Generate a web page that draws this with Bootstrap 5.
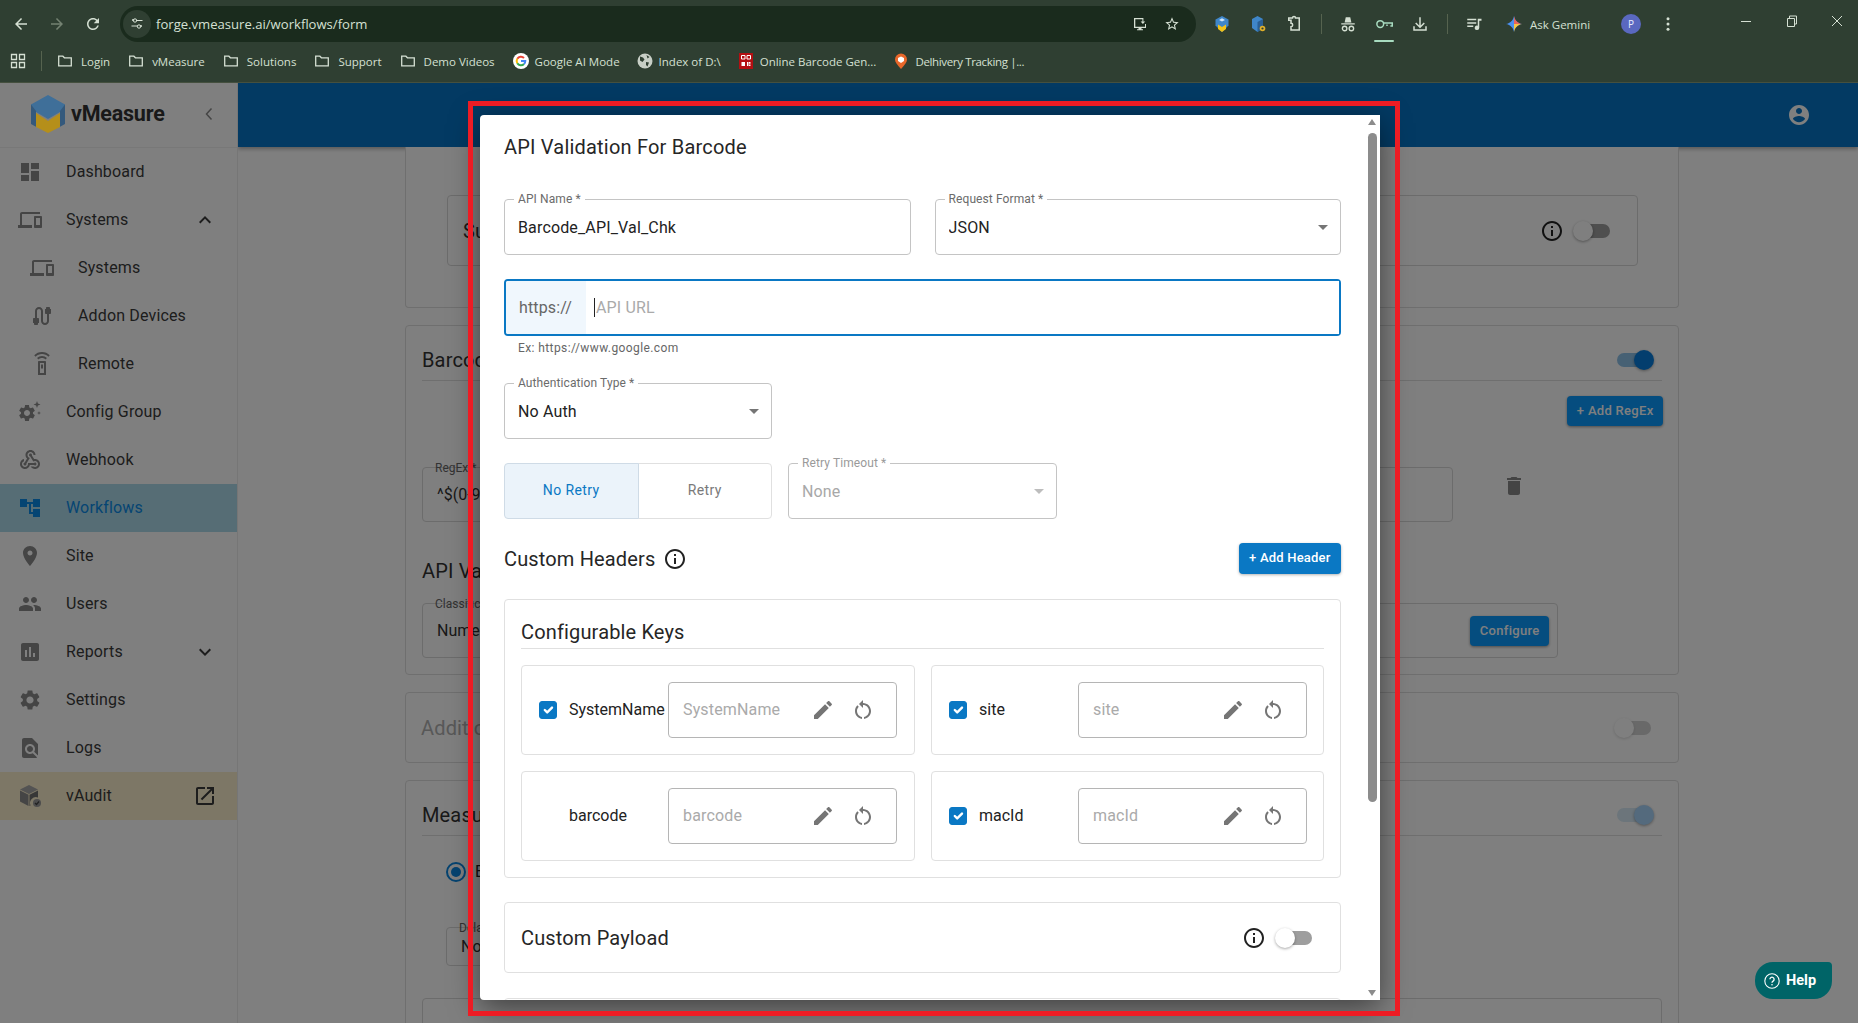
<!DOCTYPE html>
<html lang="en">
<head>
    <meta charset="UTF-8">
    <meta name="viewport" content="width=device-width, initial-scale=1, shrink-to-fit=no">
    <title>vMeasure - Workflow form</title>
    <link href="https://cdn.jsdelivr.net/npm/bootstrap@5.3.0/dist/css/bootstrap.min.css" rel="stylesheet">
    <style>
        :root {
            --primary-color: #0a78c4;
            --chrome-bg: #2f3f32;
            --chrome-text: #d5e0d3;
        }

        html, body { height: 100%; }

        body {
            overflow: hidden;
            font-family: Roboto, "Liberation Sans", sans-serif;
            background: #fff;
            color: #212121;
        }

        /* browser chrome */
        .chrome { height: 83px; background: var(--chrome-bg); border-bottom: 1px solid #45503f; color: var(--chrome-text); }
        .tool-row { height: 42px; padding: 6px 0 0 3px; }
        .tb-slot { width: 36px; height: 36px; flex: none; }
        .tb-slot svg { width: 18px; height: 18px; fill: currentColor; }
        .tb-dim { color: #748272; }
        .addr { flex: none; width: 1076px; height: 36px; margin-left: 9px; background: #1a2b1d; border-radius: 18px; padding-left: 3px; padding-right: 8px; font: 13.1px "Open Sans", sans-serif; }
        .addr-tune { width: 28px; height: 28px; margin-right: 5px; border-radius: 50%; background: #2f3f32; }
        .addr-tune svg, .addr-end svg { width: 16px; height: 16px; fill: currentColor; }
        .addr-end { width: 32px; }
        .tool-right { margin-left: 8px; flex: none; }
        .tb-sep { width: 1px; height: 20px; margin: 0 8.5px; background: #56634f; }
        .key-under { width: 20px; height: 2px; background: #a8dcc0; }
        .gem-text { margin-left: 8px; font: 11.5px "Open Sans", sans-serif; white-space: nowrap; }
        .gem-icon { margin-left: 14px; width: 16px; height: 16px; }
        .avatar { margin-left: 31px; width: 20px; height: 20px; flex: none; border-radius: 50%; background: #5a68c0; color: #e8ecff; font: 10px/20px "Open Sans", sans-serif; text-align: center; }
        .kebab { margin-left: 9px; }
        .win-btn { width: 46px; height: 36px; flex: none; margin-top: -6px; }
        .win-btn svg { width: 14px; height: 14px; }
        .win-first { margin-left: 37px; }
        .win-last { width: 36px; margin-left: 4px; }

        .mark-row { height: 38px; padding-left: 10px; font: 11.5px "Open Sans", sans-serif; }
        .mark-row svg { width: 16px; height: 16px; flex: none; }
        .mark-sep { width: 1px; height: 20px; margin: 0 15px; background: #56634f; }
        .mark-item { margin-right: 18px; gap: 8px; white-space: nowrap; }
        .mark-fav { margin-right: 17px; gap: 6px; }
        .mark-tight { letter-spacing: -.35px; }
        .folder-ico { fill: none; stroke: currentColor; stroke-width: 1.3; }

        /* app behind the dialog */
        .app-wrap { height: 940px; position: relative; }
        .side { width: 238px; flex: none; background: #fff; border-right: 1px solid #ececec; }
        .side-logo { height: 65px; border-bottom: 1px solid #f0f0f0; padding: 0 20px 2px 31px; }
        .side-logo svg.cube { width: 34px; height: 38px; margin-right: 6px; position: relative; z-index: 1; }
        .logo-text { font-weight: 700; font-size: 21.5px; letter-spacing: -.2px; color: #333; }
        .side-link { height: 48px; padding: 0 20px 0 18px; color: #3b3b3b; font-size: 16px; letter-spacing: .15px; }
        .side-link:hover { color: #3b3b3b; }
        .side-ico { width: 24px; height: 24px; margin-right: 24px; fill: #8a8a8a; flex: none; }
        .side-sub { padding-left: 30px; }
        .side-end { width: 24px; height: 24px; fill: #3b3b3b; }
        .side-on { background: #acdaea; color: #0a8ae6; }
        .side-on:hover { color: #0a8ae6; }
        .side-on .side-ico { fill: #0a8ae6; }
        .side-audit { background: #faeecc; }
        .top-bar { height: 64px; flex: none; background: #0674c6; box-shadow: 0 2px 4px rgba(0, 0, 0, .3); padding-right: 47px; position: relative; }
        .top-bar svg { width: 24px; height: 24px; fill: #fff; }
        .page { overflow: hidden; padding: 0 179px 0 167px; gap: 17px; }
        .pg-card { flex: none; background: #fff; border: 1px solid #dedede; border-radius: 4px; padding: 0 16px; --bs-card-bg: #fff; }
        .pg-first { height: 161px; border-top: 0; border-radius: 0 0 4px 4px; padding: 48px 40px 0 41px; }
        .pg-title { font-size: 20px; letter-spacing: .15px; color: #333; }
        .pg-head { height: 55px; border-bottom: 1px solid #dedede; padding: 14px 8px 0 0; }
        .pg-box { border: 1px solid #d8d8d8; border-radius: 4px; }
        .sub-box { height: 71px; padding: 0 27px 0 15px; }
        .sub-box .info-ico { margin-right: 9px; }
        .rx-add { margin-top: 15px; margin-right: -1px; }
        .pg-btn { height: 30px; padding: 0 9.5px; font-size: 13px; font-weight: 500; letter-spacing: .3px; background: #0b9bff; border: 0; color: #fff; border-radius: 4px; box-shadow: 0 1px 3px rgba(0, 0, 0, .4); }
        .rx-row { margin-top: 41px; }
        .out-fld { height: 55px; position: relative; padding: 0 14px; font-size: 16px; color: #333; }
        .out-tag { position: absolute; left: 12px; top: -7px; font-size: 12px; line-height: 14px; color: #666; }
        .rx-box { width: 1031px; }
        .rx-trash { width: 24px; height: 24px; margin-left: 49px; margin-top: -18px; fill: #888; }
        .api-title { margin-top: 37px; line-height: 24px; }
        .api-box { width: 1136px; margin-top: 20px; padding-right: 8px; margin-bottom: 16px; }
        .sw-off, .sw-on { width: 37px; height: 20px; flex: none; position: relative; display: block; }
        .sw-off::before, .sw-on::before { content: ""; position: absolute; top: 3px; height: 14px; left: 3px; right: 0; border-radius: 7px; background: #9e9e9e; }
        .sw-off::after, .sw-on::after { content: ""; position: absolute; top: 0; width: 20px; height: 20px; border-radius: 50%; background: #fff; box-shadow: 0 1px 3px rgba(0, 0, 0, .35); }
        .sw-off::after { left: 0; }
        .sw-on::after { right: 0; background: #067ddc; }
        .sw-on::before { right: 3px; left: 0; background: #8fc2e8; }
        .sw-mute::after { background: #a8d4fa; }
        .sw-mute::before { background: #d8eaf6; }
        .sw-pale { opacity: .45; }
        .info-ico { width: 24px; height: 24px; fill: #222; flex: none; margin-right: 7px; }
        .dim-title { color: #b0b0b0; }
        .radio-row { height: 24px; margin: 24px 0 0 24px; gap: 9px; }
        .radio-dot { width: 20px; height: 20px; border-radius: 50%; border: 2px solid #0a86e0; position: relative; }
        .radio-dot::after { content: ""; position: absolute; inset: 3px; border-radius: 50%; background: #0a86e0; }
        .delay-box { height: 39px; margin: 43px 0 0 24px; width: 600px; }
        .low-box { height: 120px; margin-top: 32px; }

        /* dim layer and dialog */
        .dim-layer { position: absolute; inset: 0; background: rgba(0, 0, 0, .5); }
        .dlg { position: absolute; left: 480px; top: 32px; width: 900px; height: 885px; overflow: hidden; background: #fff; border-radius: 4px 0 0 4px; padding: 20px 39px 0 24px; box-shadow: 0 8px 30px rgba(0, 0, 0, .5); }
        .dlg-title { font-size: 20px; line-height: 24px; font-weight: 400; letter-spacing: .2px; margin: 0 0 40px; color: #262626; }
        .fld { position: relative; }
        .fld-tag { position: absolute; z-index: 2; left: 10px; top: -7px; padding: 0 4px; background: #fff; font-size: 12px; line-height: 14px; letter-spacing: .1px; color: #6b6b6b; }
        .fld .form-control, .fld .form-select { height: 56px; padding: 0 13px; font-size: 16px; letter-spacing: .15px; color: #222; border: 1px solid #c4c4c4; border-radius: 4px; box-shadow: none; }
        .fld .form-select { padding-top: 1px; background-size: 10px 5px; background-position: right 12px center; background-image: url("data:image/svg+xml,%3csvg xmlns='http://www.w3.org/2000/svg' viewBox='0 0 10 5'%3e%3cpath fill='%23757575' d='M0 0h10L5 5z'/%3e%3c/svg%3e"); }
        .fld .form-select:disabled { background-color: #fff; color: #a8a8a8; background-image: url("data:image/svg+xml,%3csvg xmlns='http://www.w3.org/2000/svg' viewBox='0 0 10 5'%3e%3cpath fill='%23bdbdbd' d='M0 0h10L5 5z'/%3e%3c/svg%3e"); }
        .fld-off .fld-tag { color: #9a9a9a; }
        .url-group { height: 57px; margin-top: 24px; border: 2px solid var(--primary-color); border-radius: 4px; position: relative; }
        .url-group .input-group-text { width: 81px; padding: 0 0 0 13px; background: #f0f7fd; border: 0; border-right: 1px solid #5bb8ee; border-radius: 2px 0 0 2px; font-size: 16px; color: #666; letter-spacing: .15px; }
        .url-group .form-control { border: 0; box-shadow: none; padding: 0 10px; font-size: 16px; letter-spacing: .15px; }
        .url-group .form-control::placeholder, .key-input input::placeholder { color: #aaa; opacity: 1; }
        .url-caret { position: absolute; z-index: 6; left: 89px; top: 17px; width: 1px; height: 19px; background: #222; }
        .url-hint { margin: 3px 0 0 14px; font-size: 12px; line-height: 18px; letter-spacing: .4px; color: #666; }
        .w-auth { width: 268px; margin-top: 26px; }
        .retry-row { margin-top: 24px; gap: 16px; }
        .retry-btns { width: 268px; height: 56px; }
        .retry-btns .btn { flex: 1 1 0; font-size: 14px; font-weight: 400; letter-spacing: .4px; padding-bottom: 8px; background: #fff; border: 1px solid #e0e0e0; color: #7a7a7a; border-radius: 4px; }
        .retry-btns .btn.active { background: #ebf3fa; color: var(--primary-color); border-color: #cfdbe6; }
        .w-timeout { width: 269px; }
        .hdr-row { margin-top: 24px; height: 31px; }
        .hdr-title { font-size: 20px; letter-spacing: .15px; color: #262626; }
        .hdr-row .info-ico { margin: 0 0 0 8px; }
        .add-btn { height: 31px; padding: 0 10.5px 2px; font-size: 13px; font-weight: 500; letter-spacing: .2px; background: var(--primary-color); border: 0; border-radius: 4px; box-shadow: 0 1px 3px rgba(0, 0, 0, .3); }
        .key-panel { margin-top: 25px; height: 279px; padding: 20px 16px 0; border: 1px solid #e0e0e0; border-radius: 4px; }
        .key-title { font-size: 20px; line-height: 24px; letter-spacing: .15px; padding-bottom: 4px; border-bottom: 1px solid #e0e0e0; margin-bottom: 16px; color: #262626; height: 29px; }
        .key-grid { display: grid; grid-template-columns: 394px 393px; gap: 16px; }
        .key-card { height: 90px; border: 1px solid #e0e0e0; border-radius: 4px; padding: 0 17px; }
        .key-card:nth-child(even) { padding-right: 16px; }
        .key-card .form-check-input { width: 18px; height: 18px; margin: 0 12px 0 0; flex: none; background-color: var(--primary-color); border-color: var(--primary-color); border-radius: 3px; }
        .key-name { flex: 1; font-size: 16px; color: #222; white-space: nowrap; }
        .key-input { width: 229px; height: 56px; flex: none; border: 1px solid #b5b5b5; border-radius: 4px; padding: 0 21px 0 14px; gap: 16px; }
        .key-input input { flex: 1; min-width: 0; border: 0; outline: 0; padding: 0; font-size: 16px; letter-spacing: .15px; }
        .key-input svg { width: 24px; height: 24px; fill: #757575; flex: none; }
        .payload-box { margin-top: 24px; height: 71px; padding: 0 28px 0 16px; border: 1px solid #e0e0e0; border-radius: 4px; }
        .payload-box .info-ico { margin-right: 9px; }
        .next-box { margin-top: 25px; height: 40px; border: 1px solid #e0e0e0; border-radius: 4px; }

        /* fake scroll bar of the dialog */
        .scroll-track { position: absolute; top: 0; right: 0; bottom: 0; width: 12px; background: #fff; }
        .scroll-thumb { position: absolute; left: 0; top: 18px; width: 9px; height: 669px; border-radius: 5px; background: #8c8c8c; }
        .scroll-up, .scroll-down { position: absolute; left: 0; width: 0; height: 0; border-left: 4.5px solid transparent; border-right: 4.5px solid transparent; }
        .scroll-up { top: 4px; border-bottom: 6px solid #8c8c8c; }
        .scroll-down { bottom: 4px; border-top: 6px solid #8c8c8c; }

        .help-pill { position: absolute; z-index: 5; left: 1755px; top: 879px; width: 77px; height: 37px; background: #006467; color: #fff; border-radius: 18px 4px 18px 18px; font-size: 14.5px; font-weight: 700; gap: 6px; padding-left: 9px; }
        .help-pill svg { width: 16px; height: 16px; flex: none; }
        .red-frame { position: absolute; z-index: 10; left: 468px; top: 18px; width: 932px; height: 915px; border: 5px solid #ed1c24; pointer-events: none; }
    </style>
</head>
<body>
    <svg width="0" height="0" class="position-absolute">
        <symbol id="i-devices" viewBox="0 0 24 24"><path d="M4 6h18V4H4c-1.1 0-2 .9-2 2v11H0v3h14v-3H4V6zm19 2h-6c-.55 0-1 .45-1 1v10c0 .55.45 1 1 1h6c.55 0 1-.45 1-1V9c0-.55-.45-1-1-1zm-1 9h-4v-7h4v7z"/></symbol>
        <symbol id="i-gear" viewBox="0 0 24 24"><path d="M19.14 12.94c.04-.3.06-.61.06-.94 0-.32-.02-.64-.07-.94l2.03-1.58c.18-.14.23-.41.12-.61l-1.92-3.32c-.12-.22-.37-.29-.59-.22l-2.39.96c-.5-.38-1.03-.7-1.62-.94l-.36-2.54c-.04-.24-.24-.41-.48-.41h-3.84c-.24 0-.43.17-.47.41l-.36 2.54c-.59.24-1.13.57-1.62.94l-2.39-.96c-.22-.08-.47 0-.59.22L2.74 8.87c-.12.21-.08.47.12.61l2.03 1.58c-.05.3-.09.63-.09.94s.02.64.07.94l-2.03 1.58c-.18.14-.23.41-.12.61l1.92 3.32c.12.22.37.29.59.22l2.39-.96c.5.38 1.03.7 1.62.94l.36 2.54c.05.24.24.41.48.41h3.84c.24 0 .44-.17.47-.41l.36-2.54c.59-.24 1.13-.56 1.62-.94l2.39.96c.22.08.47 0 .59-.22l1.92-3.32c.12-.22.07-.47-.12-.61l-2.01-1.58zM12 15.6c-1.98 0-3.6-1.62-3.6-3.6s1.62-3.6 3.6-3.6 3.6 1.62 3.6 3.6-1.62 3.6-3.6 3.6z"/></symbol>
        <symbol id="i-info" viewBox="0 0 24 24"><path d="M11 7h2v2h-2zm0 4h2v6h-2zm1-9C6.48 2 2 6.48 2 12s4.48 10 10 10 10-4.48 10-10S17.52 2 12 2zm0 18c-4.41 0-8-3.59-8-8s3.59-8 8-8 8 3.59 8 8-3.59 8-8 8z"/></symbol>
        <symbol id="i-edit" viewBox="0 0 24 24"><path d="M3 17.25V21h3.75L17.81 9.94l-3.75-3.75L3 17.25zM20.71 7.04c.39-.39.39-1.02 0-1.41l-2.34-2.34c-.39-.39-1.02-.39-1.41 0l-1.83 1.83 3.75 3.75 1.83-1.83z"/></symbol>
        <symbol id="i-reset" viewBox="0 0 24 24"><path d="M12 5V2L8 6l4 4V7c3.31 0 6 2.69 6 6 0 2.97-2.17 5.43-5 5.91v2.02c3.95-.49 7-3.85 7-7.93 0-4.42-3.58-8-8-8zm-6 8c0-1.65.67-3.15 1.76-4.24L6.34 7.34C4.9 8.79 4 10.79 4 13c0 4.08 3.05 7.44 7 7.93v-2.02C8.17 18.43 6 15.97 6 13z"/></symbol>
        <symbol id="i-folder" viewBox="0 0 16 16"><path d="M1.7 3.2h4.2l1.5 1.6h6.9v8H1.7z"/></symbol>
    </svg>

    <!-- browser toolbar and bookmarks -->
    <div class="chrome">
        <div class="tool-row d-flex align-items-center">
            <div class="tb-slot d-flex align-items-center justify-content-center"><svg viewBox="0 0 24 24"><path d="M20 11H7.83l5.59-5.59L12 4l-8 8 8 8 1.41-1.41L7.83 13H20v-2z"/></svg></div>
            <div class="tb-slot tb-dim d-flex align-items-center justify-content-center"><svg viewBox="0 0 24 24"><path d="M4 11h12.17l-5.59-5.59L12 4l8 8-8 8-1.41-1.41L16.17 13H4v-2z"/></svg></div>
            <div class="tb-slot d-flex align-items-center justify-content-center"><svg viewBox="0 0 24 24"><path d="M17.65 6.35C16.2 4.9 14.21 4 12 4c-4.42 0-7.99 3.58-7.99 8s3.57 8 7.99 8c3.73 0 6.84-2.55 7.73-6h-2.08c-.82 2.33-3.04 4-5.65 4-3.31 0-6-2.69-6-6s2.69-6 6-6c1.66 0 3.14.69 4.22 1.78L13 11h7V4l-2.35 2.35z"/></svg></div>
            <div class="addr d-flex align-items-center">
                <div class="addr-tune d-flex align-items-center justify-content-center"><svg viewBox="0 0 16 16"><path d="M3 3.2h2.2v1.6H3zM7 4h6.5v1H7zM10.8 9.2H13v1.6h-2.2zM2.5 9.5H9v1H2.5z"/><circle cx="6" cy="4.5" r="1.7" fill="none" stroke="currentColor"/><circle cx="10" cy="10.5" r="1.7" fill="none" stroke="currentColor"/></svg></div>
                <span class="flex-grow-1">forge.vmeasure.ai/workflows/form</span>
                <div class="addr-end d-flex align-items-center justify-content-center"><svg viewBox="0 0 16 16"><path d="M2 2h9v1.3H3.3v7.4H13V8h1v4H9.5v1.2h1.5v1H5v-1h1.5V12H2zM11.4 2v3.4h1.8l-2.3 2.7-2.3-2.7h1.8V2z"/></svg></div>
                <div class="addr-end d-flex align-items-center justify-content-center"><svg viewBox="0 0 24 24"><path d="M22 9.24l-7.19-.62L12 2 9.19 8.63 2 9.24l5.46 4.73L5.82 21 12 17.27 18.18 21l-1.63-7.03L22 9.24zM12 15.4l-3.76 2.27 1-4.28-3.32-2.88 4.38-.38L12 6.1l1.71 4.04 4.38.38-3.32 2.88 1 4.28L12 15.4z"/></svg></div>
            </div>
            <div class="tool-right d-flex align-items-center">
                <div class="tb-slot d-flex align-items-center justify-content-center"><svg viewBox="0 0 18 18"><path fill="#3f86c9" d="M9 1l6.5 3.6v6L9 17l-6.5-6.4v-6z"/><path fill="#f2c318" d="M5 9.5l4 2.5 4-2.5V14l-4 3-4-3z"/><path fill="#cfe6fa" d="M9 3.2l3 1.7-3 1.7-3-1.7z"/></svg></div>
                <div class="tb-slot d-flex align-items-center justify-content-center"><svg viewBox="0 0 18 18"><path fill="#3f86c9" d="M3 4l5.5-3L14 4v9l-5.5 4L3 13z"/><path fill="#2a5f94" d="M8.5 7L14 4v9l-5.5 4z"/><circle cx="13.5" cy="13.5" r="2.8" fill="#e0b02a"/><circle cx="13.5" cy="13.5" r="1.1" fill="#2f3f32"/></svg></div>
                <div class="tb-slot d-flex align-items-center justify-content-center"><svg viewBox="0 0 24 24"><path fill="none" stroke="currentColor" stroke-width="2" d="M5 4h5a2 2 0 0 1 4 0h5v16H8v-4.5a2.2 2.2 0 0 0 0-4.5V7H5z"/></svg></div>
                <div class="tb-sep"></div>
                <div class="tb-slot d-flex align-items-center justify-content-center"><svg viewBox="0 0 24 24"><path d="M9 3h6l1.5 7h-9zM3 11h18v1.500H3z"/><circle cx="7.500" cy="18" r="3" fill="none" stroke="currentColor" stroke-width="1.800"/><circle cx="16.500" cy="18" r="3" fill="none" stroke="currentColor" stroke-width="1.800"/></svg></div>
                <div class="tb-slot d-flex align-items-center justify-content-center position-relative"><svg viewBox="0 0 24 24"><circle cx="7" cy="12" r="4.500" fill="none" stroke="#a8dcc0" stroke-width="2"/><path fill="none" stroke="#a8dcc0" stroke-width="2" d="M11.500 10.500H23v4h-2.500M16 14.500v-2"/></svg><span class="position-absolute bottom-0 rounded-pill key-under"></span></div>
                <div class="tb-slot d-flex align-items-center justify-content-center"><svg viewBox="0 0 24 24"><path d="M11 3h2v11l4-4 1.400 1.400L12 17.800l-6.400-6.400L7 10l4 4zM3 15h2v4h14v-4h2v6H3z"/></svg></div>
                <div class="tb-sep"></div>
                <div class="tb-slot d-flex align-items-center justify-content-center"><svg viewBox="0 0 24 24"><path d="M3 5h12v2H3zM3 9.500h12v2H3zM3 14h8v2H3zM17 5h5v2.500h-3V17a3 3 0 1 1-2-2.800z"/></svg></div>
                <svg class="gem-icon" viewBox="0 0 16 16"><path fill="#4a90f0" d="M8 0c.7 4.300 3.700 7.300 8 8-4.300.7-7.300 3.700-8 8-.7-4.300-3.700-7.300-8-8 4.300-.7 7.300-3.700 8-8z"/><path fill="#e8645a" d="M8 0c.7 4.300 3.700 7.300 8 8H8z"/><path fill="#f5c542" d="M16 8c-4.300.7-7.300 3.700-8 8V8z"/></svg>
                <span class="gem-text">Ask Gemini</span>
                <div class="avatar">P</div>
                <div class="tb-slot kebab d-flex align-items-center justify-content-center"><svg viewBox="0 0 24 24"><circle cx="12" cy="5" r="2"/><circle cx="12" cy="12" r="2"/><circle cx="12" cy="19" r="2"/></svg></div>
                <div class="win-btn win-first d-flex align-items-center justify-content-center"><svg viewBox="0 0 14 14"><path stroke="currentColor" d="M2 7.500h10"/></svg></div>
                <div class="win-btn d-flex align-items-center justify-content-center"><svg viewBox="0 0 14 14"><path fill="none" stroke="currentColor" d="M2.500 4.500h7v8h-7zM4.500 4.500v-2.500h7v8h-2"/></svg></div>
                <div class="win-btn win-last d-flex align-items-center justify-content-center"><svg viewBox="0 0 14 14"><path stroke="currentColor" d="M2 2l10 10M12 2L2 12"/></svg></div>
            </div>
        </div>
        <div class="mark-row d-flex align-items-center">
            <svg viewBox="0 0 16 16" class="apps-ico"><path fill="none" stroke="currentColor" stroke-width="1.300" d="M1.500 1.500h5v5h-5zM9.500 1.500h5v5h-5zM1.500 9.500h5v5h-5zM9.500 9.500h5v5h-5z"/></svg>
            <div class="mark-sep"></div>
            <div class="mark-item d-flex align-items-center"><svg class="folder-ico"><use href="#i-folder"/></svg><span>Login</span></div>
            <div class="mark-item d-flex align-items-center"><svg class="folder-ico"><use href="#i-folder"/></svg><span>vMeasure</span></div>
            <div class="mark-item d-flex align-items-center"><svg class="folder-ico"><use href="#i-folder"/></svg><span>Solutions</span></div>
            <div class="mark-item d-flex align-items-center"><svg class="folder-ico"><use href="#i-folder"/></svg><span>Support</span></div>
            <div class="mark-item d-flex align-items-center"><svg class="folder-ico"><use href="#i-folder"/></svg><span>Demo Videos</span></div>
            <div class="mark-item mark-fav d-flex align-items-center"><svg viewBox="0 0 16 16"><circle cx="8" cy="8" r="8" fill="#fff"/><path fill="none" stroke="#ea4335" stroke-width="2" d="M4.300 5.800A4.300 4.300 0 0 1 11 5"/><path fill="none" stroke="#fbbc05" stroke-width="2" d="M4.300 5.800a4.300 4.300 0 0 0 0 4.400"/><path fill="none" stroke="#34a853" stroke-width="2" d="M4.300 10.200A4.300 4.300 0 0 0 11 11"/><path fill="none" stroke="#4285f4" stroke-width="2" d="M11 11c.8-.8 1.300-1.800 1.300-3H8"/></svg><span>Google AI Mode</span></div>
            <div class="mark-item mark-fav d-flex align-items-center"><svg viewBox="0 0 16 16"><circle cx="8" cy="8" r="7.500" fill="#c8cfc6"/><path fill="#2f3f32" d="M3 3.500l3 1 1.500 2-2 2.500-2.500-1.500zM9 9l3 .5-1.500 4-1.500-1.500zM9.500 2l3 2-2 1.500z"/></svg><span>Index of D:\</span></div>
            <div class="mark-item mark-fav d-flex align-items-center"><svg viewBox="0 0 16 16"><path fill="#b30f12" d="M1 0h14v16H1z"/><path fill="none" stroke="#fff" d="M3.500 2.500h3.500v3.500H3.500zM9 2.500h3.500v3.500H9z"/><path fill="#fff" d="M3.500 9h3.500v4H3.500zM9 9h1.500v4H9zM11 9h1.500v1.800H11zM11 11.500h1.500V13H11z"/></svg><span>Online Barcode Gen...</span></div>
            <div class="mark-item mark-fav d-flex align-items-center"><svg viewBox="0 0 16 16"><path fill="#e8672a" d="M8 16C4 11.800 2 9 2 6.500a6 6 0 0 1 12 0C14 9 12 11.800 8 16z"/><path fill="#fff" d="M5 5l3-1.500L11 5v3L8 10 5 8z"/></svg><span class="mark-tight">Delhivery Tracking |...</span></div>
        </div>
    </div>

    <div class="app-wrap d-flex">
        <!-- sidebar -->
        <aside class="side">
            <div class="side-logo d-flex align-items-center">
                <svg class="cube" viewBox="0 0 34 38"><path fill="#3f6f99" d="M17 0l17 9.500V14L17 24 0 14V9.500z"/><path fill="#34597c" d="M0 9.500V29l5 2.800V16z"/><path fill="#34597c" d="M34 9.500V29l-5 2.800V16z"/><path fill="#b58f1a" d="M5 18l12 8 12-8v14l-12 6-12-6z"/></svg>
                <span class="logo-text flex-grow-1">vMeasure</span>
                <svg width="16" height="16" viewBox="0 0 16 16"><path fill="none" stroke="#8a8a8a" stroke-width="1.500" d="M10.500 2.500L5.500 8l5 5.500"/></svg>
            </div>
            <nav class="nav flex-column">
                <a class="nav-link side-link d-flex align-items-center" href="#"><svg class="side-ico" viewBox="0 0 24 24"><path d="M3 13h8V3H3v10zm0 8h8v-6H3v6zm10 0h8V11h-8v10zm0-18v6h8V3h-8z"/></svg>Dashboard</a>
                <a class="nav-link side-link d-flex align-items-center" href="#"><svg class="side-ico"><use href="#i-devices"/></svg><span class="flex-grow-1">Systems</span><svg class="side-end" viewBox="0 0 24 24"><path d="M12 8l-6 6 1.410 1.410L12 10.830l4.590 4.580L18 14z"/></svg></a>
                <a class="nav-link side-link side-sub d-flex align-items-center" href="#"><svg class="side-ico"><use href="#i-devices"/></svg>Systems</a>
                <a class="nav-link side-link side-sub d-flex align-items-center" href="#"><svg class="side-ico" viewBox="0 0 24 24"><path d="M20 5V4c0-.55-.45-1-1-1h-2c-.55 0-1 .45-1 1v1h-1v4c0 .55.45 1 1 1h1v7c0 1.100-.9 2-2 2s-2-.9-2-2V7c0-2.210-1.790-4-4-4S5 4.790 5 7v7H4c-.55 0-1 .45-1 1v4h1v1c0 .55.45 1 1 1h2c.55 0 1-.45 1-1v-1h1v-4c0-.55-.45-1-1-1H7V7c0-1.100.9-2 2-2s2 .9 2 2v10c0 2.210 1.790 4 4 4s4-1.790 4-4v-7h1c.55 0 1-.45 1-1V5h-1z"/></svg>Addon Devices</a>
                <a class="nav-link side-link side-sub d-flex align-items-center" href="#"><svg class="side-ico" viewBox="0 0 24 24"><path fill-rule="evenodd" d="M9 9h6c.55 0 1 .45 1 1v13H8V10c0-.55.45-1 1-1zm1 2v10h4V11zM11 12.500h2v4h-2zM7.050 6.050l1.410 1.410C9.370 6.560 10.620 6 12 6s2.630.56 3.540 1.460l1.410-1.410C15.680 4.780 13.930 4 12 4s-3.680.78-4.950 2.050zM12 0C8.960 0 6.210 1.230 4.220 3.220l1.410 1.410C7.260 3.010 9.510 2 12 2s4.740 1.010 6.360 2.640l1.410-1.410C17.790 1.230 15.040 0 12 0z"/></svg>Remote</a>
                <a class="nav-link side-link d-flex align-items-center" href="#"><svg class="side-ico" viewBox="0 0 24 24"><use href="#i-gear" x="-1" y="3" width="20" height="20"/><path d="M19 1l.9 2.600L22.500 4.500l-2.600.9L19 8l-.9-2.600-2.600-.9 2.600-.9zM21 11l.5 1.500 1.500.5-1.500.5L21 15l-.5-1.500-1.500-.5 1.500-.5z"/></svg>Config Group</a>
                <a class="nav-link side-link d-flex align-items-center" href="#"><svg class="side-ico" viewBox="0 0 24 24"><path d="M10 15h5.880c.27-.31.67-.5 1.120-.5.83 0 1.500.67 1.500 1.500s-.67 1.500-1.500 1.500c-.44 0-.84-.19-1.120-.5H11.900c-.46 2.280-2.480 4-4.900 4-2.760 0-5-2.240-5-5 0-2.420 1.720-4.440 4-4.900v2.070c-1.160.41-2 1.530-2 2.830 0 1.650 1.350 3 3 3s3-1.350 3-3v-1zm2.500-11c1.650 0 3 1.350 3 3h2c0-2.760-2.240-5-5-5s-5 2.240-5 5c0 1.430.6 2.710 1.550 3.620l-2.350 3.900c-.68.14-1.200.75-1.200 1.480 0 .83.67 1.500 1.500 1.500s1.500-.67 1.500-1.500c0-.16-.02-.31-.07-.45l3.380-5.630C10.490 9.610 9.500 8.420 9.500 7c0-1.650 1.350-3 3-3zm4.500 9c-.64 0-1.230.2-1.720.54l-3.050-5.070C11.530 8.350 11 7.740 11 7c0-.83.67-1.500 1.500-1.500S14 6.170 14 7c0 .15-.02.29-.06.43l2.190 3.650c.28-.05.57-.08.87-.08 2.760 0 5 2.240 5 5s-2.240 5-5 5c-1.850 0-3.470-1.010-4.330-2.500h2.670c.48.32 1.050.5 1.660.5 1.650 0 3-1.350 3-3s-1.350-3-3-3z"/></svg>Webhook</a>
                <a class="nav-link side-link side-on d-flex align-items-center" href="#"><svg class="side-ico" viewBox="0 0 24 24"><path d="M22 11V3h-7v3H9V3H2v8h7V8h2v10h4v3h7v-8h-7v3h-2V8h2v3z"/></svg>Workflows</a>
                <a class="nav-link side-link d-flex align-items-center" href="#"><svg class="side-ico" viewBox="0 0 24 24"><path d="M12 2C8.130 2 5 5.130 5 9c0 5.250 7 13 7 13s7-7.750 7-13c0-3.870-3.130-7-7-7zm0 9.500c-1.380 0-2.500-1.120-2.500-2.500s1.120-2.500 2.500-2.500 2.500 1.120 2.500 2.500-1.120 2.500-2.500 2.500z"/></svg>Site</a>
                <a class="nav-link side-link d-flex align-items-center" href="#"><svg class="side-ico" viewBox="0 0 24 24"><path d="M16 11c1.660 0 2.990-1.340 2.990-3S17.660 5 16 5c-1.660 0-3 1.340-3 3s1.340 3 3 3zm-8 0c1.660 0 2.990-1.340 2.990-3S9.660 5 8 5C6.340 5 5 6.340 5 8s1.340 3 3 3zm0 2c-2.330 0-7 1.170-7 3.500V19h14v-2.500c0-2.330-4.670-3.500-7-3.500zm8 0c-.29 0-.62.02-.97.05 1.160.84 1.970 1.970 1.970 3.450V19h6v-2.500c0-2.330-4.670-3.500-7-3.500z"/></svg>Users</a>
                <a class="nav-link side-link d-flex align-items-center" href="#"><svg class="side-ico" viewBox="0 0 24 24"><path d="M19 3H5c-1.100 0-2 .9-2 2v14c0 1.100.9 2 2 2h14c1.100 0 2-.9 2-2V5c0-1.100-.9-2-2-2zM9 17H7v-7h2v7zm4 0h-2V7h2v10zm4 0h-2v-4h2v4z"/></svg><span class="flex-grow-1">Reports</span><svg class="side-end" viewBox="0 0 24 24"><path d="M16.590 8.590L12 13.170 7.410 8.590 6 10l6 6 6-6z"/></svg></a>
                <a class="nav-link side-link d-flex align-items-center" href="#"><svg class="side-ico"><use href="#i-gear"/></svg>Settings</a>
                <a class="nav-link side-link d-flex align-items-center" href="#"><svg class="side-ico" viewBox="0 0 24 24"><path d="M20 19.590V8l-6-6H6c-1.100 0-1.990.9-1.990 2L4 20c0 1.100.89 2 1.990 2H18c.45 0 .85-.15 1.190-.4l-4.430-4.430c-.8.52-1.740.83-2.760.83-2.760 0-5-2.240-5-5s2.240-5 5-5 5 2.240 5 5c0 1.020-.31 1.960-.83 2.750L20 19.590zM9 13c0 1.660 1.340 3 3 3s3-1.340 3-3-1.340-3-3-3-3 1.340-3 3z"/></svg>Logs</a>
                <a class="nav-link side-link side-audit d-flex align-items-center" href="#"><svg class="side-ico" viewBox="0 0 24 24"><path fill="#a6a6a6" d="M11 1l9 4.500L11 10 2 5.500z"/><path fill="#8a8a8a" d="M2 6.500l8.500 4.300V22L2 17.500z"/><path fill="#6e6e6e" d="M20 6.500v7a6 6 0 0 0-7.500 8L11.500 22V10.800z"/><circle cx="19" cy="19" r="4" fill="#9a9a9a"/><path fill="none" stroke="#444" stroke-width="1.200" d="M17 19l1.500 1.500 2.500-3"/></svg><span class="flex-grow-1">vAudit</span><svg class="side-end" viewBox="0 0 24 24"><path d="M19 19H5V5h7V3H5c-1.110 0-2 .9-2 2v14c0 1.100.89 2 2 2h14c1.100 0 2-.9 2-2v-7h-2v7zM14 3v2h3.590l-9.830 9.830 1.410 1.410L19 6.410V10h2V3h-7z"/></svg></a>
            </nav>
        </aside>

        <!-- workflow form behind the dialog -->
        <div class="flex-grow-1 d-flex flex-column overflow-hidden">
            <header class="top-bar d-flex align-items-center justify-content-end">
                <svg viewBox="0 0 24 24"><path d="M12 2C6.480 2 2 6.480 2 12s4.480 10 10 10 10-4.480 10-10S17.520 2 12 2zm0 3c1.660 0 3 1.340 3 3s-1.340 3-3 3-3-1.340-3-3 1.340-3 3-3zm0 14.200c-2.500 0-4.710-1.280-6-3.220.03-1.990 4-3.080 6-3.080 1.990 0 5.970 1.090 6 3.080-1.290 1.940-3.500 3.220-6 3.220z"/></svg>
            </header>
            <main class="page flex-grow-1 d-flex flex-column">
                <section class="card pg-card pg-first">
                    <div class="pg-box sub-box d-flex align-items-center">
                        <span class="flex-grow-1 pg-title">Submit</span>
                        <svg class="info-ico"><use href="#i-info"/></svg>
                        <span class="sw-off"></span>
                    </div>
                </section>
                <section class="card pg-card">
                    <div class="pg-head d-flex align-items-center justify-content-between">
                        <span class="pg-title">Barcode</span>
                        <span class="sw-on"></span>
                    </div>
                    <div class="rx-add d-flex justify-content-end"><button class="btn pg-btn" type="button">+ Add RegEx</button></div>
                    <div class="rx-row d-flex align-items-center">
                        <div class="pg-box out-fld rx-box d-flex align-items-center"><span class="out-tag">RegEx *</span><span>^$(0-9)</span></div>
                        <svg class="rx-trash" viewBox="0 0 24 24"><path d="M6 19c0 1.100.9 2 2 2h8c1.100 0 2-.9 2-2V7H6v12zM19 4h-3.500l-1-1h-5l-1 1H5v2h14V4z"/></svg>
                    </div>
                    <div class="pg-title api-title">API Validation</div>
                    <div class="pg-box out-fld api-box d-flex align-items-center justify-content-between">
                        <span class="out-tag">Classification</span>
                        <span>Numeric</span>
                        <button class="btn pg-btn" type="button">Configure</button>
                    </div>
                </section>
                <section class="card pg-card sub-box flex-row align-items-center justify-content-between">
                    <span class="pg-title dim-title">Additional</span>
                    <span class="sw-off sw-pale"></span>
                </section>
                <section class="card pg-card">
                    <div class="pg-head d-flex align-items-center justify-content-between">
                        <span class="pg-title">Measurement</span>
                        <span class="sw-on sw-mute"></span>
                    </div>
                    <div class="radio-row d-flex align-items-center"><span class="radio-dot"></span><span>Enable</span></div>
                    <div class="pg-box out-fld delay-box d-flex align-items-center"><span class="out-tag">Delay</span><span>None</span></div>
                    <div class="pg-box low-box"></div>
                </section>
            </main>
        </div>

        <div class="dim-layer"></div>

        <!-- dialog -->
        <div class="dlg">
            <h2 class="dlg-title">API Validation For Barcode</h2>
            <div class="row gx-4">
                <div class="col-6">
                    <div class="fld">
                        <label class="fld-tag">API Name *</label>
                        <input class="form-control" type="text" value="Barcode_API_Val_Chk">
                    </div>
                </div>
                <div class="col-6">
                    <div class="fld">
                        <label class="fld-tag">Request Format *</label>
                        <select class="form-select"><option>JSON</option></select>
                    </div>
                </div>
            </div>
            <div class="input-group url-group">
                <span class="input-group-text">https://</span>
                <input class="form-control" type="text" placeholder="API URL">
                <span class="url-caret"></span>
            </div>
            <div class="url-hint">Ex: https://www.google.com</div>
            <div class="fld w-auth">
                <label class="fld-tag">Authentication Type *</label>
                <select class="form-select"><option>No Auth</option></select>
            </div>
            <div class="retry-row d-flex">
                <div class="btn-group retry-btns" role="group">
                    <button class="btn active" type="button">No Retry</button>
                    <button class="btn" type="button">Retry</button>
                </div>
                <div class="fld fld-off w-timeout">
                    <label class="fld-tag">Retry Timeout *</label>
                    <select class="form-select" disabled><option>None</option></select>
                </div>
            </div>
            <div class="hdr-row d-flex align-items-center justify-content-between">
                <div class="d-flex align-items-center">
                    <span class="hdr-title">Custom Headers</span>
                    <svg class="info-ico"><use href="#i-info"/></svg>
                </div>
                <button class="btn btn-primary add-btn" type="button">+ Add Header</button>
            </div>
            <div class="key-panel">
                <div class="key-title">Configurable Keys</div>
                <div class="key-grid">
                    <div class="key-card d-flex align-items-center">
                        <input class="form-check-input" type="checkbox" checked>
                        <span class="key-name">SystemName</span>
                        <div class="key-input d-flex align-items-center">
                            <input type="text" placeholder="SystemName">
                            <svg><use href="#i-edit"/></svg>
                            <svg><use href="#i-reset"/></svg>
                        </div>
                    </div>
                    <div class="key-card d-flex align-items-center">
                        <input class="form-check-input" type="checkbox" checked>
                        <span class="key-name">site</span>
                        <div class="key-input d-flex align-items-center">
                            <input type="text" placeholder="site">
                            <svg><use href="#i-edit"/></svg>
                            <svg><use href="#i-reset"/></svg>
                        </div>
                    </div>
                    <div class="key-card d-flex align-items-center">
                        <input class="form-check-input invisible" type="checkbox">
                        <span class="key-name">barcode</span>
                        <div class="key-input d-flex align-items-center">
                            <input type="text" placeholder="barcode">
                            <svg><use href="#i-edit"/></svg>
                            <svg><use href="#i-reset"/></svg>
                        </div>
                    </div>
                    <div class="key-card d-flex align-items-center">
                        <input class="form-check-input" type="checkbox" checked>
                        <span class="key-name">macId</span>
                        <div class="key-input d-flex align-items-center">
                            <input type="text" placeholder="macId">
                            <svg><use href="#i-edit"/></svg>
                            <svg><use href="#i-reset"/></svg>
                        </div>
                    </div>
                </div>
            </div>
            <div class="payload-box d-flex align-items-center">
                <span class="hdr-title flex-grow-1">Custom Payload</span>
                <svg class="info-ico"><use href="#i-info"/></svg>
                <span class="sw-off"></span>
            </div>
            <div class="next-box"></div>
            <div class="scroll-track">
                <span class="scroll-up"></span>
                <span class="scroll-thumb"></span>
                <span class="scroll-down"></span>
            </div>
        </div>

        <div class="help-pill d-flex align-items-center">
            <svg viewBox="0 0 16 16"><circle cx="8" cy="8" r="7.200" fill="none" stroke="#fff" stroke-width="1.100"/><path fill="none" stroke="#fff" stroke-width="1.300" d="M5.900 6.300a2.100 2.100 0 1 1 3.200 1.800c-.8.5-1.100.9-1.100 1.700"/><circle cx="8" cy="11.800" r=".8" fill="#fff"/></svg>
            Help
        </div>
        <div class="red-frame"></div>
    </div>
</body>
</html>
